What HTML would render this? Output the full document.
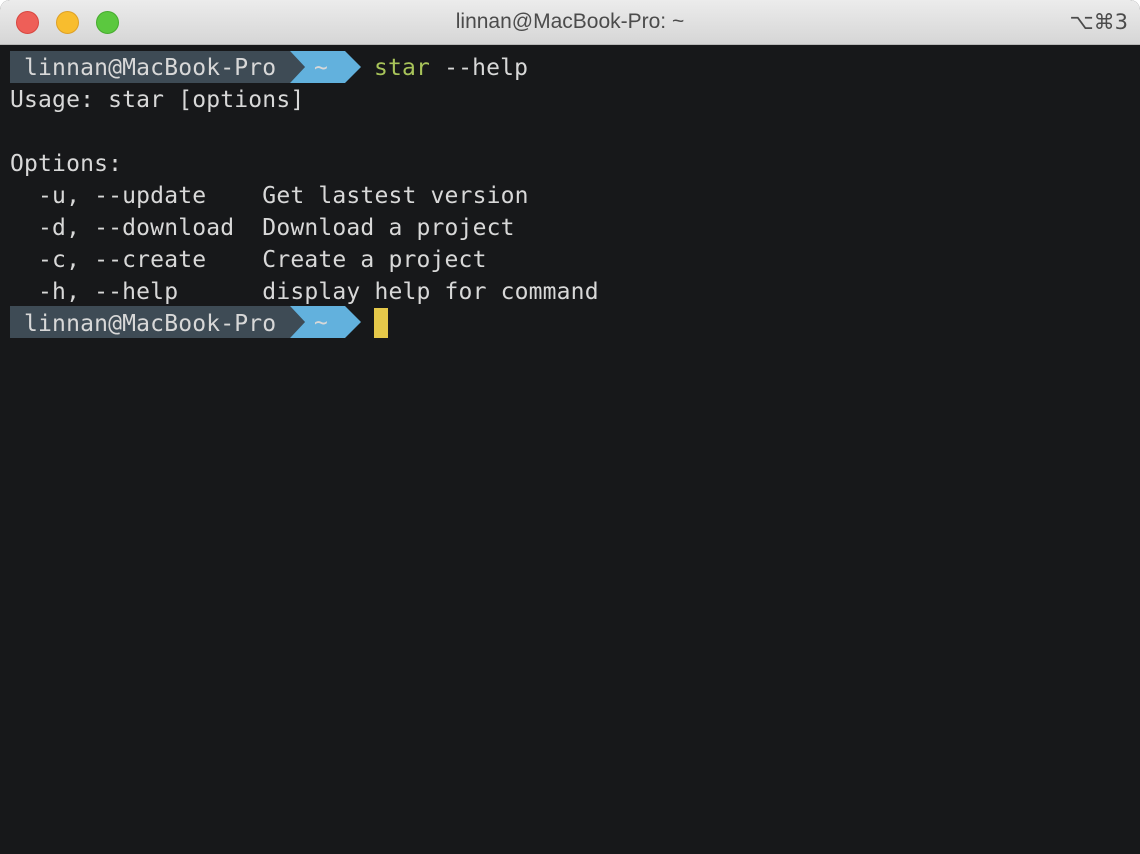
<!DOCTYPE html>
<html><head><meta charset="utf-8"><style>
html,body{margin:0;padding:0;background:#fff;}
.win{position:absolute;left:0;top:0;width:1140px;height:854px;border-radius:10px 10px 0 0;overflow:hidden;background:#17181a;}
.tb{position:absolute;left:0;top:0;width:1140px;height:45px;background:linear-gradient(#ececec,#d6d6d6);border-bottom:1px solid #b8b8b8;box-sizing:border-box;}
.dot{position:absolute;top:11px;width:23px;height:23px;border-radius:50%;box-sizing:border-box;}
.title{position:absolute;left:0;right:0;top:10px;text-align:center;font:21px "Liberation Sans",sans-serif;color:#4b4b4b;}
.sc{position:absolute;right:12px;top:10px;font:21px "DejaVu Sans","Liberation Sans",sans-serif;color:#4b4b4b;}
.t{position:absolute;left:10px;font:23px/32px "DejaVu Sans Mono",monospace;letter-spacing:0.17px;color:#d8d8d8;white-space:pre;}
svg{position:absolute;left:0;}
</style></head><body><div class="win">
<div class="tb">
<div class="dot" style="left:16px;background:#ee5f58;border:1px solid #d8463f"></div>
<div class="dot" style="left:56px;background:#f8bd2e;border:1px solid #dea025"></div>
<div class="dot" style="left:96px;background:#5bc83f;border:1px solid #46ab2e"></div>
<div class="title">linnan@MacBook-Pro: ~</div>
<div class="sc">⌥⌘3</div>
</div>
<svg style="top:51px" width="400" height="32"><polygon points="10,0 290,0 305,16 290,32 10,32" fill="#3e4b55"/><polygon points="290,0 345,0 361,16 345,32 290,32 305,16" fill="#62b1dd"/></svg>
<svg style="top:306px" width="400" height="32"><polygon points="10,0 290,0 305,16 290,32 10,32" fill="#3e4b55"/><polygon points="290,0 345,0 361,16 345,32 290,32 305,16" fill="#62b1dd"/></svg>
<div style="position:absolute;left:374px;top:308px;width:14px;height:30px;background:#e5c84a"></div>
<div class="t" style="top:52px"> linnan@MacBook-Pro</div>
<div class="t" style="top:52px;left:314px">~</div>
<div class="t" style="top:52px;left:374px"><span style="color:#a8c45a">star</span> --help</div>
<div class="t" style="top:307px;left:314px">~</div>
<div class="t" style="top:84px">Usage: star [options]

Options:
  -u, --update    Get lastest version
  -d, --download  Download a project
  -c, --create    Create a project
  -h, --help      display help for command
 linnan@MacBook-Pro</div>
</div></body></html>
